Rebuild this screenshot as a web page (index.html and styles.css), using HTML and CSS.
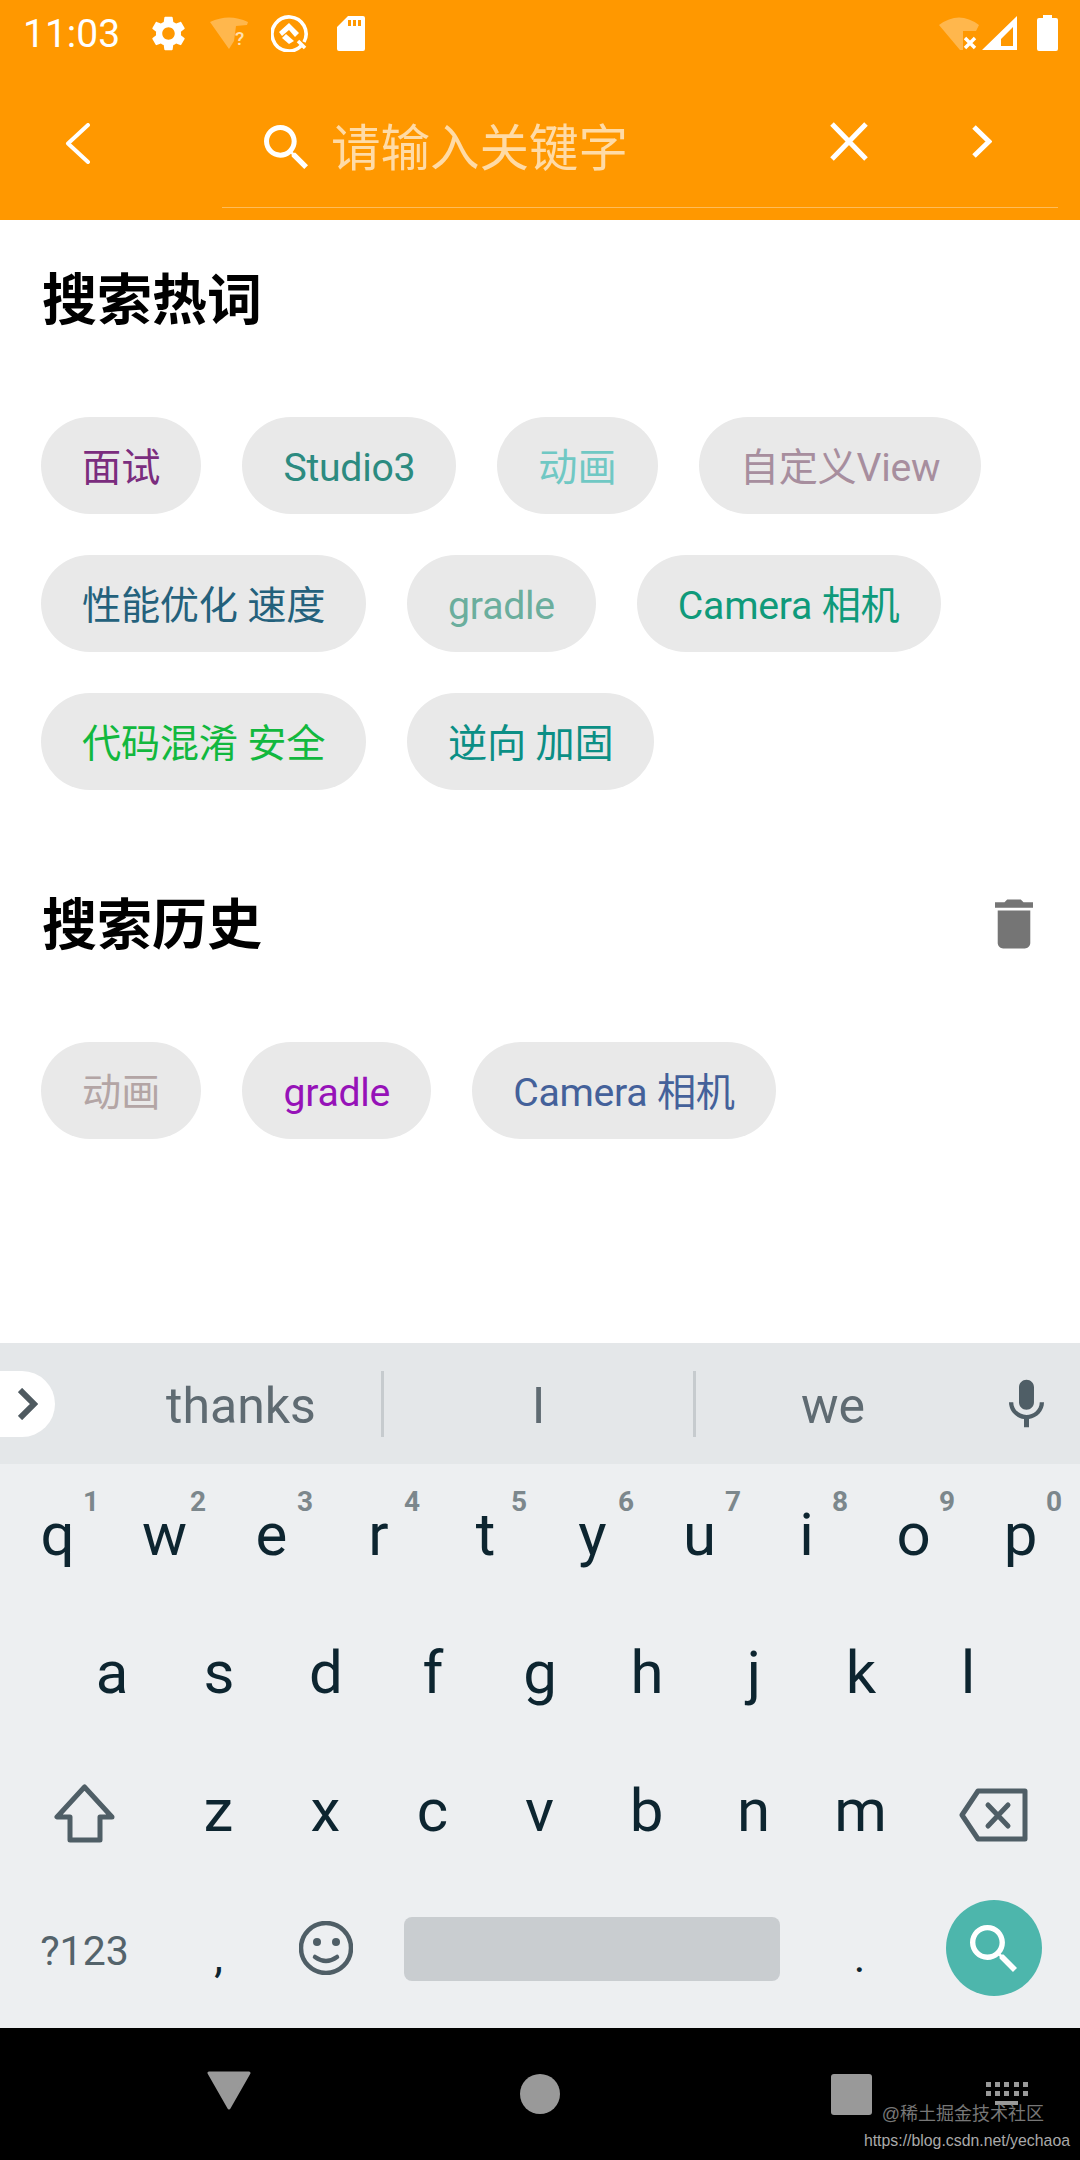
FILE: index.html
```html
<!DOCTYPE html>
<html>
<head>
  <meta charset="utf-8">
  <meta name="viewport" content="width=device-width, initial-scale=1">
  <title>搜索</title>
  <link rel="stylesheet" href="styles.css">
</head>
<body>
  <div class="screen">
    <header class="appbar">
      <div class="status">
        <span class="clock">11:03</span>
        <svg class="ic-gear" viewBox="2.5 2 19 20"><path fill="#fff" d="M19.14 12.94c.04-.3.06-.61.06-.94 0-.32-.02-.64-.07-.94l2.03-1.58c.18-.14.23-.41.12-.61l-1.92-3.32c-.12-.22-.37-.29-.59-.22l-2.39.96c-.5-.38-1.03-.7-1.62-.94l-.36-2.54c-.04-.24-.24-.41-.48-.41h-3.84c-.24 0-.43.17-.47.41l-.36 2.54c-.59.24-1.13.57-1.62.94l-2.39-.96c-.22-.08-.47 0-.59.22L2.74 8.87c-.12.21-.08.47.12.61l2.03 1.58c-.05.3-.09.63-.09.94s.02.64.07.94l-2.03 1.58c-.18.14-.23.41-.12.61l1.92 3.32c.12.22.37.29.59.22l2.39-.96c.5.38 1.03.7 1.62.94l.36 2.54c.05.24.24.41.48.41h3.84c.24 0 .44-.17.47-.41l.36-2.54c.59-.24 1.13-.56 1.62-.94l2.39.96c.22.08.47 0 .59-.22l1.92-3.32c.12-.22.07-.47-.12-.61l-2.01-1.58zM12 15.6c-1.98 0-3.6-1.62-3.6-3.6s1.62-3.6 3.6-3.6 3.6 1.62 3.6 3.6-1.62 3.6-3.6 3.6z"/></svg>
        <svg class="ic-wifi" viewBox="0 0 39 32">
          <path fill="#fff" opacity=".3" d="M0 5Q19-4 38 5L37 8 26 9 24 24 19 32Z"/>
          <text x="25" y="28" class="wifi-q">?</text>
        </svg>
        <svg class="ic-q" viewBox="0 0 38 38">
          <path fill="none" stroke="#fff" stroke-width="3.6" d="M30 32A17 17 0 1 1 33 28"/>
          <path fill="none" stroke="#fff" stroke-width="3.6" d="M27 27 34 34"/>
          <path fill="#fff" d="M8 18 18 9 28 19 24 23 18 16 11 22Z"/>
          <path fill="#fff" d="M11 24 15 20 23 27 18 30Z"/>
        </svg>
        <svg class="ic-sd" viewBox="0 0 28 35">
          <path fill="#fff" fill-rule="evenodd" d="M11 0H26Q28 0 28 2V33Q28 35 26 35H2Q0 35 0 33V11ZM11 4V10H14V4ZM16 4V10H19V4ZM21 4V10H24V4Z"/>
        </svg>
        <span class="status-gap"></span>
        <svg class="ic-wifi2" viewBox="0 0 40 34">
          <path fill="#fff" opacity=".3" d="M0 9Q20-6 40 9L37 15H24V34H21Z"/>
          <path stroke="#fff" stroke-width="3.4" d="M26 22 36 32M36 22 26 32"/>
        </svg>
        <svg class="ic-signal" viewBox="0 0 35 34">
          <path fill="#fff" fill-rule="evenodd" d="M35 0V34H0ZM31 11 19 23V30H31Z"/>
        </svg>
        <svg class="ic-battery" viewBox="0 0 21 36">
          <path fill="#fff" d="M6 0H15V3H19Q21 3 21 5V34Q21 36 19 36H2Q0 36 0 34V5Q0 3 2 3H6Z"/>
        </svg>
      </div>
      <div class="toolbar">
        <div class="back-slot">
          <svg class="ic-back" viewBox="0 0 25 41"><path fill="none" stroke="#fff" stroke-width="4" stroke-linecap="round" stroke-linejoin="round" d="M23 2 3 20.5 23 39"/></svg>
        </div>
        <div class="search-field">
          <svg class="ic-search" viewBox="3 3 17.49 17.49"><path fill="#fff" d="M15.5 14h-.79l-.28-.27C15.41 12.59 16 11.11 16 9.5 16 5.91 13.09 3 9.5 3S3 5.91 3 9.5 5.91 16 9.5 16c1.61 0 3.09-.59 4.23-1.57l.27.28v.79l5 4.99L20.49 19l-4.99-5zm-6 0C7.01 14 5 11.99 5 9.5S7.01 5 9.5 5 14 7.01 14 9.5 11.99 14 9.5 14z"/></svg>
          <span class="placeholder">请输入关键字</span>
          <svg class="ic-close" viewBox="0 0 38 39"><path stroke="#fff" stroke-width="5" d="M2 2 36 37M36 2 2 37"/></svg>
          <svg class="ic-forward" viewBox="0 0 20 33"><path fill="none" stroke="#fff" stroke-width="5" d="M2 2 17 16.5 2 31"/></svg>
        </div>
      </div>
    </header>

    <main class="content">
      <div class="section-head">
        <h2>搜索热词</h2>
      </div>
      <div class="chips">
        <span class="chip c-purple">面试</span>
        <span class="chip tight c-teal">Studio3</span>
        <span class="chip c-aqua">动画</span>
        <span class="chip tight c-mauve">自定义View</span>
        <span class="chip tight c-navy">性能优化 速度</span>
        <span class="chip tight c-sage">gradle</span>
        <span class="chip tight c-emerald">Camera 相机</span>
        <span class="chip tight c-green">代码混淆 安全</span>
        <span class="chip tight c-sea">逆向 加固</span>
      </div>
      <div class="section-head second">
        <h2>搜索历史</h2>
        <svg class="ic-trash" viewBox="5 3 14 18"><path fill="#757575" d="M6 19c0 1.1.9 2 2 2h8c1.1 0 2-.9 2-2V7H6v12zM19 4h-3.5l-1-1h-5l-1 1H5v2h14V4z"/></svg>
      </div>
      <div class="chips">
        <span class="chip c-taupe">动画</span>
        <span class="chip tight c-violet">gradle</span>
        <span class="chip tight c-indigo">Camera 相机</span>
      </div>
    </main>

    <section class="keyboard">
      <div class="suggest">
        <div class="pill">
          <svg class="ic-pill" viewBox="0 0 20 32"><path fill="none" stroke="#4f5a60" stroke-width="6" d="M2 2 16 16 2 30"/></svg>
        </div>
        <span class="word w1">thanks</span>
        <span class="word w2">I</span>
        <span class="word w3">we</span>
        <svg class="ic-mic" viewBox="5 2 14 19"><path fill="#4f5e66" d="M12 14c1.66 0 2.99-1.34 2.99-3L15 5c0-1.66-1.34-3-3-3S9 3.34 9 5v6c0 1.66 1.34 3 3 3zm5.3-3c0 3-2.54 5.1-5.3 5.1S6.7 14 6.7 11H5c0 3.41 2.72 6.23 6 6.72V21h2v-3.28c3.28-.48 6-3.3 6-6.72h-1.7z"/></svg>
      </div>
      <div class="keys">
        <div class="row">
          <span class="key">q<i>1</i></span><span class="key">w<i>2</i></span><span class="key">e<i>3</i></span><span class="key">r<i>4</i></span><span class="key">t<i>5</i></span><span class="key">y<i>6</i></span><span class="key">u<i>7</i></span><span class="key">i<i>8</i></span><span class="key">o<i>9</i></span><span class="key">p<i>0</i></span>
        </div>
        <div class="row row-home">
          <span class="key">a</span><span class="key">s</span><span class="key">d</span><span class="key">f</span><span class="key">g</span><span class="key">h</span><span class="key">j</span><span class="key">k</span><span class="key">l</span>
        </div>
        <div class="row">
          <span class="key wide">
            <svg class="ic-shift" viewBox="0 0 61 59"><path fill="none" stroke="#4f5e66" stroke-width="5" stroke-linejoin="round" d="M30.5 3 3 33H16V56H46V33H58Z"/></svg>
          </span>
          <span class="key">z</span><span class="key">x</span><span class="key">c</span><span class="key">v</span><span class="key">b</span><span class="key">n</span><span class="key">m</span>
          <span class="key wide">
            <svg class="ic-del" viewBox="0 0 69 54"><path fill="none" stroke="#4f5e66" stroke-width="5" stroke-linejoin="round" d="M19 3H66V51H19L3 27Z"/><path stroke="#4f5e66" stroke-width="5" stroke-linecap="round" d="M29 17 49 38M49 17 29 38"/></svg>
          </span>
        </div>
        <div class="row">
          <span class="key wide sym">?123</span>
          <span class="key punct">,</span>
          <span class="key">
            <svg class="ic-emoji" viewBox="0 0 54 54"><circle cx="27" cy="27" r="25" fill="none" stroke="#4f5e66" stroke-width="4.5"/><circle cx="18" cy="21" r="4" fill="#4f5e66"/><circle cx="37" cy="21" r="4" fill="#4f5e66"/><path fill="none" stroke="#4f5e66" stroke-width="4.5" stroke-linecap="round" d="M16 36Q27 44 38 36"/></svg>
          </span>
          <span class="space-slot"><span class="spacebar"></span></span>
          <span class="key punct">.</span>
          <span class="key wide">
            <span class="go">
              <svg class="ic-go" viewBox="3 3 17.49 17.49"><path fill="#fff" d="M15.5 14h-.79l-.28-.27C15.41 12.59 16 11.11 16 9.5 16 5.91 13.09 3 9.5 3S3 5.91 3 9.5 5.91 16 9.5 16c1.61 0 3.09-.59 4.23-1.57l.27.28v.79l5 4.99L20.49 19l-4.99-5zm-6 0C7.01 14 5 11.99 5 9.5S7.01 5 9.5 5 14 7.01 14 9.5 11.99 14 9.5 14z"/></svg>
            </span>
          </span>
        </div>
      </div>
    </section>

    <footer class="navbar">
      <svg class="nav-back" viewBox="0 0 44 39"><path fill="#999" stroke="#999" stroke-width="3" stroke-linejoin="round" d="M2 2H42L22 37Z"/></svg>
      <span class="nav-home"></span>
      <span class="nav-recent"></span>
      <svg class="nav-kbd" viewBox="0 0 42 24">
        <g fill="#999">
          <rect x="0" y="0" width="5" height="5"/><rect x="9" y="0" width="5" height="5"/><rect x="18" y="0" width="5" height="5"/><rect x="28" y="0" width="5" height="5"/><rect x="37" y="0" width="5" height="5"/>
          <rect x="0" y="9" width="5" height="5"/><rect x="9" y="9" width="5" height="5"/><rect x="18" y="9" width="5" height="5"/><rect x="28" y="9" width="5" height="5"/><rect x="37" y="9" width="5" height="5"/>
          <rect x="9" y="19" width="23" height="4"/>
        </g>
      </svg>
      <div class="watermark">
        <div class="wm-site">@稀土掘金技术社区</div>
        <div class="wm-url">https://blog.csdn.net/yechaoa</div>
      </div>
    </footer>
  </div>
</body>
</html>
```

FILE: styles.css
```css
* {
    box-sizing: border-box;
}
body {
    margin: 0;
    background-color: #fff;
    font-family: Roboto, "Noto Sans CJK SC", sans-serif;
}
svg {
    display: block;
    flex: none;
}
.screen {
    width: 1080px;
    height: 2160px;
    display: flex;
    flex-direction: column;
    overflow: hidden;
}

/* app bar */
.appbar {
    height: 220px;
    background-color: #ff9800;
    flex: none;
}
.status {
    height: 66px;
    display: flex;
    align-items: center;
    padding-left: 23px;
    color: #fff;
}
.clock {
    width: 129px;
    padding-top: 2px;
    font-size: 39px;
    line-height: 64px;
}
.ic-gear { width: 33px; height: 35px; }
.ic-wifi { width: 39px; height: 32px; margin-left: 25px; }
.wifi-q { font: 500 19px Roboto, sans-serif; fill: #ffe0b2; }
.ic-q { width: 38px; height: 38px; margin-left: 22px; }
.ic-sd { width: 28px; height: 35px; margin-left: 28px; }
.status-gap { flex: 1; }
.ic-wifi2 { width: 40px; height: 34px; }
.ic-signal { width: 35px; height: 34px; margin-left: 3px; }
.ic-battery { width: 21px; height: 36px; margin-left: 20px; margin-right: 22px; }

.toolbar {
    height: 142px;
    display: flex;
}
.back-slot {
    width: 222px;
    padding: 57px 0 0 65px;
}
.ic-back { width: 25px; height: 41px; }
.search-field {
    width: 836px;
    height: 142px;
    display: flex;
    align-items: flex-start;
    padding-left: 42px;
    border-bottom: 1px solid rgba(255, 255, 255, 0.35);
}
.ic-search { width: 44px; height: 44px; margin-top: 59px; }
.placeholder {
    margin-left: 23px;
    margin-top: 47px;
    width: 499px;
    font-size: 49.5px;
    line-height: 72px;
    color: rgba(255, 255, 255, 0.65);
}
.ic-close { width: 38px; height: 39px; margin-top: 56px; }
.ic-forward { width: 20px; height: 33px; margin-top: 59px; margin-left: 104px; }

/* chips */
.content {
    flex: 1;
    padding: 0 41px;
}
.section-head {
    height: 158px;
    display: flex;
    align-items: center;
    justify-content: space-between;
    padding-right: 6px;
}
.section-head.second {
    margin-top: 55px;
}
.section-head h2 {
    margin: -8px 0 0 1px;
    font-size: 55px;
    font-weight: 700;
    color: #000;
}
.ic-trash { width: 38px; height: 50px; }
.chips {
    display: flex;
    flex-wrap: wrap;
    gap: 41px;
    margin-top: 39px;
}
.chip {
    height: 97px;
    line-height: 91px;
    padding: 6px 41px 0;
    border-radius: 49px;
    background-color: #e9e9e9;
    font-size: 39.2px;
    white-space: nowrap;
}
.chip.tight {
    letter-spacing: -0.25px;
}
.c-purple { color: #7b2d7e; }
.c-teal { color: #2c8b80; }
.c-aqua { color: #70c8c4; }
.c-mauve { color: #a78e9e; }
.c-navy { color: #24617c; }
.c-sage { color: #6bae9d; }
.c-emerald { color: #0f9a7a; }
.c-green { color: #12b83e; }
.c-sea { color: #0b8f85; }
.c-taupe { color: #b3a5a5; }
.c-violet { color: #9612b8; }
.c-indigo { color: #44619a; }

/* keyboard */
.keyboard {
    height: 685px;
    flex: none;
    background-color: #edeff1;
}
.suggest {
    height: 121px;
    display: flex;
    align-items: center;
    background-color: #e4e7e9;
}
.pill {
    width: 55px;
    height: 66px;
    margin-right: 46px;
    padding: 17px 0 0 18px;
    background-color: #fff;
    border-radius: 0 33px 33px 0;
}
.ic-pill { width: 20px; height: 32px; }
.word {
    height: 66px;
    line-height: 70px;
    text-align: center;
    font-size: 50px;
    color: #5f6b72;
}
.w1 { width: 283px; border-right: 3px solid #c6cbce; }
.w2 { width: 312px; border-right: 3px solid #c6cbce; }
.w3 { width: 274px; }
.ic-mic { width: 35px; height: 49px; margin-left: 39px; }

.keys {
    padding: 1px 4px 0;
}
.row {
    height: 138px;
    display: flex;
}
.row-home {
    padding-left: 54.5px;
}
.key {
    position: relative;
    width: 107px;
    flex: none;
    display: flex;
    align-items: center;
    justify-content: center;
    font-size: 60px;
    color: #0d2530;
}
.key i {
    position: absolute;
    top: 21px;
    right: 12px;
    font-size: 28px;
    line-height: 32px;
    font-style: normal;
    font-weight: 700;
    color: #7c878c;
}
.key.wide {
    width: 161px;
}
.sym {
    padding-top: 5px;
    font-size: 41px;
    color: #54636b;
}
.punct {
    font-size: 44px;
    padding-top: 18px;
}
.ic-shift { width: 61px; height: 59px; margin-top: 6px; }
.ic-del { width: 69px; height: 54px; margin: 10px 0 0 -3px; }
.ic-emoji { width: 54px; height: 54px; }
.space-slot {
    width: 427px;
    flex: none;
    display: flex;
    align-items: center;
    padding: 0 25px;
}
.spacebar {
    width: 376px;
    height: 64px;
    margin-top: 2px;
    border-radius: 8px;
    background-color: #c9cdd0;
}
.go {
    width: 96px;
    height: 96px;
    border-radius: 50%;
    background-color: #4db6ac;
    display: flex;
    align-items: center;
    justify-content: center;
}
.ic-go { width: 47px; height: 47px; }

/* nav bar */
.navbar {
    position: relative;
    height: 132px;
    flex: none;
    background-color: #000;
    display: flex;
    align-items: center;
    padding-left: 207px;
}
.nav-back { width: 44px; height: 39px; margin-top: -8px; }
.nav-home {
    width: 40px;
    height: 40px;
    margin-left: 269px;
    border-radius: 50%;
    background-color: #999;
}
.nav-recent {
    width: 41px;
    height: 41px;
    margin-left: 271px;
    border-radius: 3px;
    background-color: #999;
}
.nav-kbd { width: 42px; height: 24px; margin-left: 114px; }
.watermark {
    position: absolute;
    right: 10px;
    bottom: 8px;
    text-align: right;
    font-family: "Liberation Sans", "Noto Sans CJK SC", sans-serif;
}
.wm-site {
    padding-right: 26px;
    font-size: 18px;
    line-height: 24px;
    color: #777;
}
.wm-url {
    margin-top: 4px;
    font-size: 15.85px;
    line-height: 22px;
    color: #aaa;
}
```
